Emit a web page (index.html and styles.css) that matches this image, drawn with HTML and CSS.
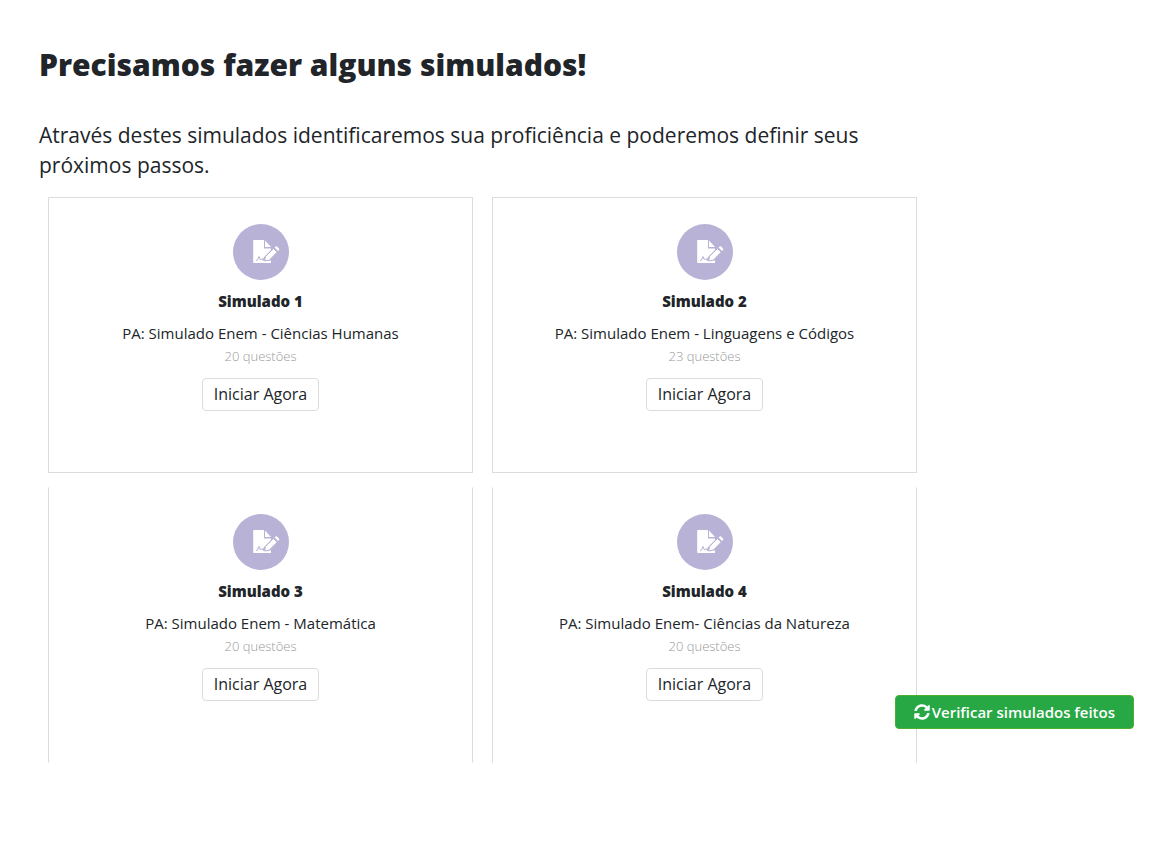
FILE: index.html
```html
<!DOCTYPE html>
<html lang="pt-BR">
<head>
<meta charset="utf-8">
<meta name="viewport" content="width=device-width, initial-scale=1">
<title>Simulados</title>
<link rel="stylesheet" href="styles.css">
</head>
<body>
<svg class="sprite" aria-hidden="true">
  <symbol id="exam" viewBox="0 0 56 56">
    <circle cx="28" cy="28" r="28" fill="#b8b3d6"/>
    <path fill="#fff" d="M21 16h10v8.500h7v1.500l-7 7-1.500 3.500h8.500V39H21a.8.8 0 0 1-.8-.8V16.800A.8.800 0 0 1 21 16z"/>
    <path fill="#fff" d="M32 16.500l6 6.500h-6z"/>
    <path fill="none" stroke="#b8b3d6" stroke-width="1" d="M23 36.500l1.500-.5 1.500-3.500 1.500 3.500 1.500-1.500 1 1.500h1.500"/>
    <path fill="#fff" stroke="#b8b3d6" stroke-width="1" d="M31.500 37l1-4.500 8-8 3.700 3.700-8 8z"/>
    <path fill="#fff" d="M41.600 23.500l1-1a1 1 0 0 1 1.400 0l2 2a1 1 0 0 1 0 1.400l-1 1z"/>
  </symbol>
</svg>
<main class="page">
  <h1 class="title">Precisamos fazer alguns simulados!</h1>
  <h2 class="lead">Através destes simulados identificaremos sua proficiência e poderemos definir seus próximos passos.</h2>
  <div class="cards">
    <section class="card">
      <svg class="card-icon" aria-hidden="true"><use href="#exam"/></svg>
      <h3 class="card-title">Simulado 1</h3>
      <p class="card-name">PA: Simulado Enem - Ciências Humanas</p>
      <p class="card-count">20 questões</p>
      <button class="start" type="button">Iniciar Agora</button>
    </section>
    <section class="card">
      <svg class="card-icon" aria-hidden="true"><use href="#exam"/></svg>
      <h3 class="card-title">Simulado 2</h3>
      <p class="card-name">PA: Simulado Enem - Linguagens e Códigos</p>
      <p class="card-count">23 questões</p>
      <button class="start" type="button">Iniciar Agora</button>
    </section>
    <section class="card card-open">
      <svg class="card-icon" aria-hidden="true"><use href="#exam"/></svg>
      <h3 class="card-title">Simulado 3</h3>
      <p class="card-name">PA: Simulado Enem - Matemática</p>
      <p class="card-count">20 questões</p>
      <button class="start" type="button">Iniciar Agora</button>
    </section>
    <section class="card card-open">
      <svg class="card-icon" aria-hidden="true"><use href="#exam"/></svg>
      <h3 class="card-title">Simulado 4</h3>
      <p class="card-name">PA: Simulado Enem- Ciências da Natureza</p>
      <p class="card-count">20 questões</p>
      <button class="start" type="button">Iniciar Agora</button>
    </section>
  </div>
</main>
<button class="verify" type="button">
  <svg class="verify-icon" viewBox="0 0 512 512" aria-hidden="true"><path fill="currentColor" d="M370.720 133.280C339.458 104.008 298.888 87.962 255.848 88c-77.458.068-144.328 53.178-162.791 126.850-1.344 5.363-6.122 9.150-11.651 9.150H24.103c-7.498 0-13.194-6.807-11.807-14.176C33.933 94.924 134.813 8 256 8c66.448 0 126.791 26.136 171.315 68.685L463.030 40.970C478.149 25.851 504 36.559 504 57.941V192c0 13.255-10.745 24-24 24H345.941c-21.382 0-32.090-25.851-16.971-40.971l41.750-41.749zM32 296h134.059c21.382 0 32.090 25.851 16.971 40.971l-41.750 41.750c31.262 29.273 71.835 45.319 114.876 45.280 77.418-.070 144.315-53.144 162.787-126.849 1.344-5.363 6.122-9.150 11.651-9.150h57.304c7.498 0 13.194 6.807 11.807 14.176C478.067 417.076 377.187 504 256 504c-66.448 0-126.791-26.136-171.315-68.685L48.970 471.030C33.851 486.149 8 475.441 8 454.059V320c0-13.255 10.745-24 24-24z"/></svg>
  <span>Verificar simulados feitos</span>
</button>
</body>
</html>
```
FILE: styles.css
```css
* { box-sizing: border-box; }
body {
  margin: 0;
  background: #fff;
  color: #212529;
  font-family: "Open Sans", sans-serif;
}
.sprite { position: absolute; width: 0; height: 0; }
.page { max-width: 956px; padding: 46px 39px; }
.title {
  margin: 0 0 36px;
  font-size: 30px;
  line-height: 38px;
  font-weight: 800;
}
.lead {
  margin: 0 0 17px;
  font-size: 21px;
  line-height: 30px;
  font-weight: 500;
}
.cards {
  display: grid;
  grid-template-columns: 1fr 1fr;
  gap: 14px 19px;
  padding: 0 0 0 9px;
}
.card {
  display: flex;
  flex-direction: column;
  align-items: center;
  padding: 26px 16px 61px;
  border: 1px solid #dcdcdc;
  text-align: center;
}
.card-open { border-top-color: transparent; border-bottom-color: transparent; }
.card-icon { width: 56px; height: 56px; }
.card-title {
  margin: 9px 0;
  font-size: 15px;
  line-height: 24px;
  font-weight: 800;
}
.card-name {
  margin: 0;
  font-size: 15px;
  line-height: 23px;
}
.card-count {
  margin: 0 0 11px;
  color: #999;
  font-size: 13px;
  line-height: 22px;
  font-weight: 300;
}
.start {
  padding: 4px 11px;
  border: 1px solid #dcdcdc;
  border-radius: 4px;
  background: #fff;
  color: #212529;
  font: 500 16px/23px "Open Sans", sans-serif;
}
.verify {
  position: fixed;
  right: 17px;
  bottom: 128px;
  display: flex;
  align-items: center;
  gap: 2px;
  padding: 4px 18px;
  border: 1px solid #4caf2f;
  border-radius: 4px;
  background: #28a745;
  color: #fff;
  font: 600 15px/24px "Open Sans", sans-serif;
}
.verify-icon { width: 16px; height: 16px; }
```
